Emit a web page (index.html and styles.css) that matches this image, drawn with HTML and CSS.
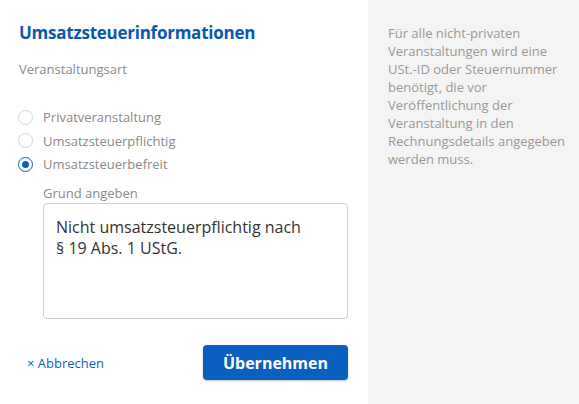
FILE: index.html
```html
<!DOCTYPE html>
<html lang="de">
<head>
<meta charset="utf-8">
<link rel="stylesheet" href="styles.css">
</head>
<body>
<div class="layout">
  <main class="form">
    <h1 class="title">Umsatzsteuerinformationen</h1>
    <div class="section-label">Veranstaltungsart</div>
    <div class="radios">
      <label class="radio"><span class="dot"></span>Privatveranstaltung</label>
      <label class="radio"><span class="dot"></span>Umsatzsteuerpflichtig</label>
      <label class="radio"><span class="dot checked"></span>Umsatzsteuerbefreit</label>
    </div>
    <div class="reason">
      <div class="reason-label">Grund angeben</div>
      <div class="textarea">Nicht umsatzsteuerpflichtig nach<br>§ 19 Abs. 1 UStG.</div>
    </div>
    <div class="actions">
      <a class="cancel">× Abbrechen</a>
      <button class="primary">Übernehmen</button>
    </div>
  </main>
  <aside class="info">
    Für alle nicht-privaten Veranstaltungen wird eine USt.-ID oder Steuernummer benötigt, die vor Veröffentlichung der Veranstaltung in den Rechnungsdetails angegeben werden muss.
  </aside>
</div>
</body>
</html>
```
FILE: styles.css
```css
* { box-sizing: border-box; }
html, body { margin: 0; padding: 0; height: 100%; background: #fff; }
body { font-family: "Open Sans", "Noto Sans", sans-serif; color: #333; }
.layout { display: flex; height: 404px; width: 579px; }
.form { width: 368px; padding: 22px 20px 0 19px; }
.title { margin: 0; font-size: 17px; font-weight: 700; color: #0b57b0; line-height: 22px; letter-spacing: -0.25px; }
.section-label { margin-top: 16px; font-size: 13px; color: #8a8a8a; line-height: 18px; }
.radios { margin-top: 30px; display: flex; flex-direction: column; gap: 5.5px; }
.radio { display: flex; align-items: center; gap: 10px; font-size: 13px; color: #8a8a8a; line-height: 18px; }
.dot { width: 15px; height: 15px; margin-left: -1px; border-radius: 50%; border: 1px solid #d6d6d6; background: #fff; flex: none; position: relative; }
.dot.checked { border-color: #0b5fc0; }
.dot.checked::after { content: ""; position: absolute; left: 3px; top: 3px; width: 7px; height: 7px; border-radius: 50%; background: #0b5fc0; }
.reason { margin-left: 24px; margin-top: 11px; }
.reason-label { font-size: 13px; color: #8a8a8a; line-height: 18px; }
.textarea { margin-top: 1px; height: 116px; width: 305px; border: 1px solid #cfcfcf; border-radius: 4px; padding: 13px 12px 0; font-size: 16px; line-height: 21px; color: #333; }
.actions { margin-top: 26px; display: flex; align-items: center; justify-content: space-between; padding-left: 8px; }
.cancel { font-size: 13px; color: #0b5fc0; }
.primary { width: 145px; height: 35px; border: none; border-radius: 4px; background: #0b5fc0; color: #fff; font-family: inherit; font-size: 16px; font-weight: 700; box-shadow: 0 1px 2px rgba(0,0,0,0.25); }
.info { flex: 1; background: #f4f4f4; padding: 24px 6px 0 20px; font-size: 13px; line-height: 18px; color: #999; }
```
